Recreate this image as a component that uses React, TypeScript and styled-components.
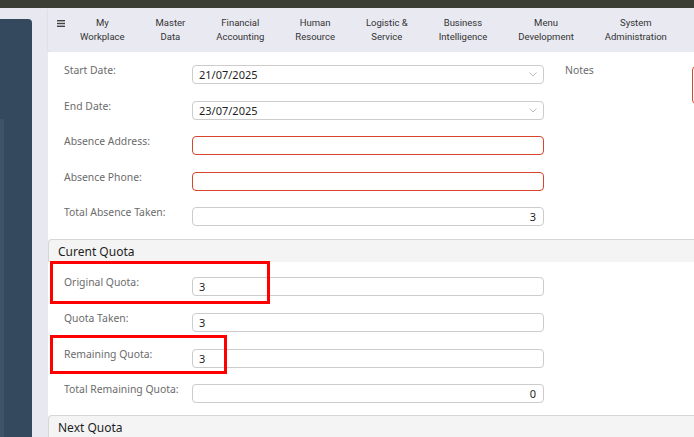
import React from 'react'
import styled, { createGlobalStyle } from 'styled-components'

const GlobalStyle = createGlobalStyle`
  html, body {
    margin: 0;
    padding: 0;
    overflow: hidden;
    background: #e8e8f0;
  }
  * {
    box-sizing: border-box;
  }
`

const menuItems = [
  ['My', 'Workplace'],
  ['Master', 'Data'],
  ['Financial', 'Accounting'],
  ['Human', 'Resource'],
  ['Logistic &', 'Service'],
  ['Business', 'Intelligence'],
  ['Menu', 'Development'],
  ['System', 'Administration'],
]

type FieldProps = {
  label: string
  value?: string
  date?: boolean
  invalid?: boolean
  alignRight?: boolean
  highlight?: { width: number; height: number; top: number }
}

function Field({ label, value = '', date, invalid, alignRight, highlight }: FieldProps) {
  return (
    <Row>
      {highlight && (
        <Highlight $w={highlight.width} $h={highlight.height} $top={highlight.top} />
      )}
      <Label>{label}</Label>
      <InputWrap>
        <Input readOnly value={value} $invalid={invalid} $right={alignRight} />
        {date && (
          <Chevron viewBox="0 0 8 5" width="8" height="5">
            <polyline points="0.5,0.5 4,4 7.5,0.5" fill="none" stroke="#bdbdbd" strokeWidth="1" />
          </Chevron>
        )}
      </InputWrap>
    </Row>
  )
}

export default function App() {
  return (
    <>
      <GlobalStyle />
      <Page>
        <TopStrip />
        <Body>
          <Sidebar>
            <SidebarTop />
            <SidebarRail />
          </Sidebar>
          <Main>
            <MenuBar>
              <Burger viewBox="0 0 8 7" width="8" height="7">
                <rect x="0" y="0" width="8" height="1.4" fill="#444" />
                <rect x="0" y="2.8" width="8" height="1.4" fill="#444" />
                <rect x="0" y="5.6" width="8" height="1.4" fill="#444" />
              </Burger>
              {menuItems.map(([a, b]) => (
                <MenuItem key={a + b}>
                  <span>{a}</span>
                  <span>{b}</span>
                </MenuItem>
              ))}
            </MenuBar>
            <Panel>
              <TopForm>
                <Fields $pad="13px 0 13px">
                  <Field label="Start Date:" value="21/07/2025" date />
                  <Field label="End Date:" value="23/07/2025" date />
                  <Field label="Absence Address:" invalid />
                  <Field label="Absence Phone:" invalid />
                  <Field label="Total Absence Taken:" value="3" alignRight />
                </Fields>
                <Notes>
                  <NotesLabel>Notes</NotesLabel>
                  <NotesBox />
                </Notes>
              </TopForm>

              <SectionHeader>Curent Quota</SectionHeader>
              <Fields $pad="15px 0 12px">
                <Field
                  label="Original Quota:"
                  value="3"
                  highlight={{ width: 220, height: 43, top: -16 }}
                />
                <Field label="Quota Taken:" value="3" />
                <Field
                  label="Remaining Quota:"
                  value="3"
                  highlight={{ width: 177, height: 39, top: -14 }}
                />
                <Field label="Total Remaining Quota:" value="0" alignRight />
              </Fields>

              <SectionHeader>Next Quota</SectionHeader>
            </Panel>
          </Main>
        </Body>
      </Page>
    </>
  )
}

const Page = styled.div`
  display: flex;
  flex-direction: column;
  height: 100vh;
  width: 100vw;
  overflow: hidden;
  font-family: 'Noto Sans', 'Open Sans', sans-serif;
`

const TopStrip = styled.div`
  height: 8px;
  flex-shrink: 0;
  background: #3b3e35;
`

const Body = styled.div`
  flex: 1;
  display: flex;
  min-height: 0;
`

const Sidebar = styled.div`
  width: 32px;
  flex-shrink: 0;
  margin-top: 11px;
  background: #34485e;
  border-top-right-radius: 4px;
  display: flex;
  flex-direction: column;
`

const SidebarTop = styled.div`
  height: 100px;
`

const SidebarRail = styled.div`
  flex: 1;
  width: 4px;
  background: #3e5269;
`

const Main = styled.div`
  flex: 1;
  margin-left: 16px;
  display: flex;
  flex-direction: column;
  min-width: 0;
`

const MenuBar = styled.div`
  height: 44px;
  flex-shrink: 0;
  display: flex;
  align-items: center;
  gap: 31px;
  padding-left: 9px;
  background: #e9e9f1;
  border-bottom-left-radius: 4px;
  box-shadow: -1px 1px 1px rgba(0, 0, 0, 0.04);
`

const Burger = styled.svg`
  flex-shrink: 0;
  margin-top: -14px;
  margin-right: -16px;
`

const MenuItem = styled.div`
  display: flex;
  flex-direction: column;
  align-items: center;
  font-family: Roboto, 'Liberation Sans', sans-serif;
  font-size: 9.5px;
  line-height: 14px;
  color: #333333;
  white-space: nowrap;
`

const Panel = styled.div`
  flex: 1;
  background: #ffffff;
  overflow: hidden;
`

const TopForm = styled.div`
  display: flex;
  align-items: flex-start;
`

const Fields = styled.div<{ $pad: string }>`
  display: flex;
  flex-direction: column;
  gap: 16.6px;
  padding: ${(p) => p.$pad};
  padding-left: 16px;
`

const Row = styled.div`
  position: relative;
  display: flex;
  align-items: flex-start;
`

const Label = styled.div`
  width: 128px;
  flex-shrink: 0;
  margin-top: -1px;
  font-size: 10.4px;
  line-height: 12px;
  color: #6b6b6b;
`

const InputWrap = styled.div`
  position: relative;
  width: 352px;
`

const Input = styled.input<{ $invalid?: boolean; $right?: boolean }>`
  display: block;
  width: 100%;
  height: 19px;
  margin: 0;
  padding: 0 7px 0 6px;
  border: 1px solid ${(p) => (p.$invalid ? '#d6452c' : '#cccccc')};
  border-radius: 4px;
  background: #fff;
  font-family: 'Noto Sans', sans-serif;
  font-size: 11px;
  color: #1f1f1f;
  text-align: ${(p) => (p.$right ? 'right' : 'left')};
  outline: none;
`

const Chevron = styled.svg`
  position: absolute;
  right: 7px;
  top: 7px;
`

const Highlight = styled.div<{ $w: number; $h: number; $top: number }>`
  position: absolute;
  left: -14px;
  top: ${(p) => p.$top}px;
  width: ${(p) => p.$w}px;
  height: ${(p) => p.$h}px;
  border: 3px solid #ff0000;
  pointer-events: none;
  z-index: 2;
`

const Notes = styled.div`
  display: flex;
  align-items: flex-start;
  margin-left: 21px;
  padding-top: 13px;
`

const NotesLabel = styled.div`
  width: 127px;
  flex-shrink: 0;
  margin-top: -1px;
  font-size: 10.4px;
  line-height: 12px;
  color: #6b6b6b;
`

const NotesBox = styled.div`
  width: 200px;
  height: 38px;
  margin-top: 1px;
  border: 1px solid #d6452c;
  border-radius: 4px;
  flex-shrink: 0;
`

const SectionHeader = styled.div`
  height: 23px;
  padding-left: 9px;
  display: flex;
  align-items: center;
  background: #f4f4f4;
  border-top: 1px solid #d6d6d6;
  border-left: 1px solid #d6d6d6;
  border-top-left-radius: 4px;
  font-size: 12px;
  color: #1f1f1f;
`
